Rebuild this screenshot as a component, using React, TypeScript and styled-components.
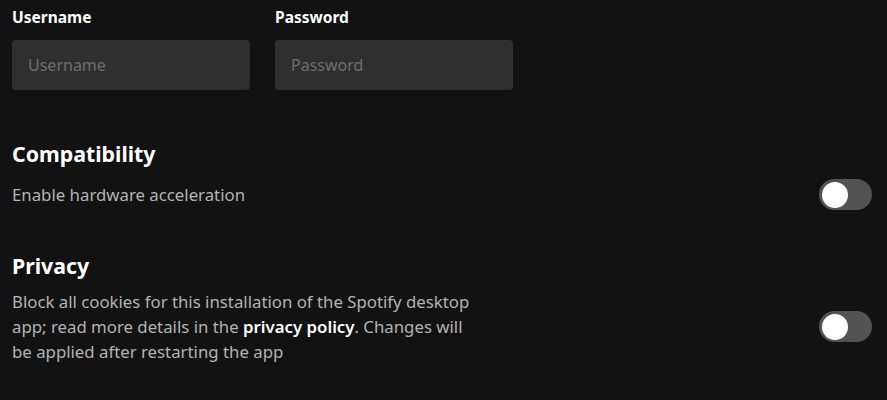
import React from 'react';
import styled, { createGlobalStyle } from 'styled-components';

const GlobalStyle = createGlobalStyle`
  html, body {
    margin: 0;
    padding: 0;
    background: #121212;
  }
  body {
    font-family: 'Noto Sans', 'Liberation Sans', sans-serif;
    color: #fff;
  }
`;

const Page = styled.div`
  width: 887px;
  height: 400px;
  box-sizing: border-box;
  padding: 6px 15px 0 12px;
  background: #121212;
`;

const LoginRow = styled.div`
  display: flex;
  gap: 25px;
`;

const Field = styled.label`
  display: flex;
  flex-direction: column;
  gap: 11px;
`;

const FieldLabel = styled.span`
  font-size: 15.5px;
  font-weight: 700;
  line-height: 23px;
  color: #fff;
`;

const TextInput = styled.input`
  width: 238px;
  height: 50px;
  box-sizing: border-box;
  border: none;
  border-radius: 4px;
  background: #2f2f2f;
  padding: 0 16px;
  font-family: inherit;
  font-size: 16px;
  color: #fff;
  outline: none;

  &::placeholder {
    color: #6e6e6e;
  }
`;

const Section = styled.section<{ $top: number }>`
  margin-top: ${p => p.$top}px;
`;

const Heading = styled.h2`
  margin: 0;
  font-size: 21.3px;
  font-weight: 700;
  line-height: 28px;
  color: #fff;
`;

const SettingRow = styled.div<{ $gap: number }>`
  display: flex;
  align-items: center;
  justify-content: space-between;
  margin-top: ${p => p.$gap}px;
`;

const Description = styled.p`
  margin: 0;
  max-width: 465px;
  font-size: 16.8px;
  line-height: 25px;
  color: #b3b3b3;
`;

const PolicyLink = styled.a`
  color: #fff;
  font-weight: 600;
  text-decoration: none;
`;

const Toggle = styled.button<{ $on?: boolean }>`
  position: relative;
  flex: none;
  width: 53px;
  height: 31px;
  padding: 0;
  border: none;
  border-radius: 16px;
  background: ${p => (p.$on ? '#1ed760' : '#535353')};
  cursor: pointer;

  &::after {
    content: '';
    position: absolute;
    top: 2.5px;
    left: ${p => (p.$on ? '24px' : '3px')};
    width: 26px;
    height: 26px;
    border-radius: 50%;
    background: #fff;
  }
`;

export default function App() {
  return (
    <>
      <GlobalStyle />
      <Page>
        <LoginRow>
          <Field>
            <FieldLabel>Username</FieldLabel>
            <TextInput placeholder="Username" />
          </Field>
          <Field>
            <FieldLabel>Password</FieldLabel>
            <TextInput type="password" placeholder="Password" />
          </Field>
        </LoginRow>

        <Section $top={50}>
          <Heading>Compatibility</Heading>
          <SettingRow $gap={11}>
            <Description>Enable hardware acceleration</Description>
            <Toggle aria-label="Enable hardware acceleration" />
          </SettingRow>
        </Section>

        <Section $top={42}>
          <Heading>Privacy</Heading>
          <SettingRow $gap={9}>
            <Description>
              Block all cookies for this installation of the Spotify desktop
              app; read more details in the{' '}
              <PolicyLink href="#">privacy policy</PolicyLink>. Changes will
              be applied after restarting the app
            </Description>
            <Toggle aria-label="Block all cookies" />
          </SettingRow>
        </Section>
      </Page>
    </>
  );
}
